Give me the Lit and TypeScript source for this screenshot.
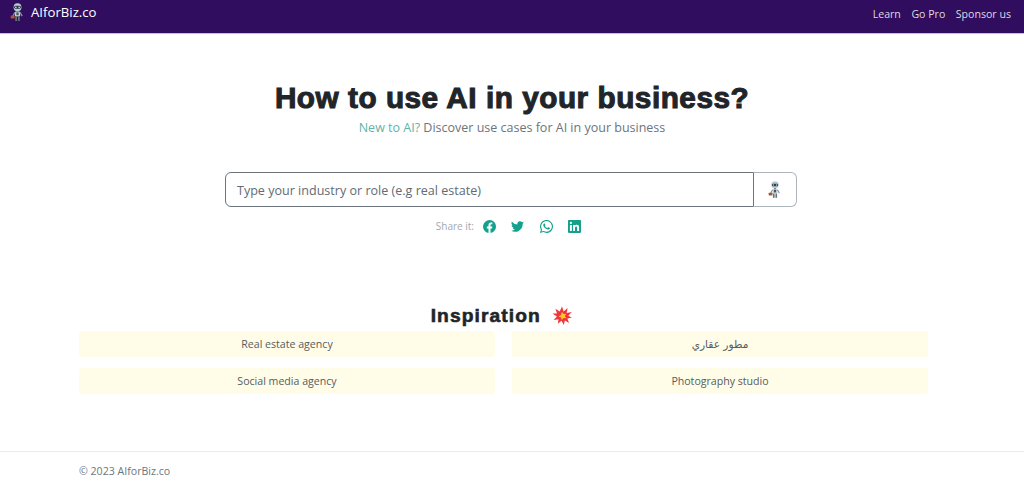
import { LitElement, html, css, svg } from "lit";
import { customElement } from "lit/decorators.js";

const robot = (s: number) => html`<svg class="robot" width=${s} height=${s * 1.25} viewBox="0 0 16 20">
  <rect x="6.8" y="7.5" width="2.4" height="2" fill="#59646c"/>
  <circle cx="8" cy="4.4" r="4.2" fill="#bccbd3"/>
  <rect x="4.4" y="3" width="7.2" height="3" rx="1.5" fill="#2a3640"/>
  <circle cx="6.2" cy="4.5" r=".9" fill="#a9dcf0"/><circle cx="9.8" cy="4.5" r=".9" fill="#a9dcf0"/>
  <rect x="5.2" y="9" width="5.6" height="5.4" rx="1.4" fill="#c3ced4"/>
  <rect x="6.8" y="10" width="2.4" height="3" fill="#49545c"/>
  <path d="M5.2 10 L3 14 M10.8 10 L13 14" stroke="#87949c" stroke-width="1.3"/>
  <rect x=".8" y="13.4" width="4.2" height="3.2" rx=".5" fill="#a8582e"/>
  <rect x="5.6" y="14.4" width="1.9" height="4.8" fill="#65727a"/>
  <rect x="8.5" y="14.4" width="1.9" height="4.8" fill="#65727a"/>
</svg>`;

const icons = [
  svg`<path d="M16 8.05A8 8 0 1 0 6.75 16v-5.6H4.72V8.05h2.03V6.3c0-2 1.2-3.1 3-3.1.88 0 1.8.16 1.8.16v1.97h-1c-1 0-1.3.62-1.3 1.25v1.47h2.22l-.36 2.35H9.25V16A8 8 0 0 0 16 8.05z"/>`,
  svg`<path d="M5.03 14.5c6.04 0 9.34-5 9.34-9.34 0-.14 0-.28-.01-.42A6.7 6.7 0 0 0 16 3.04a6.6 6.6 0 0 1-1.89.52 3.3 3.3 0 0 0 1.45-1.82 6.6 6.6 0 0 1-2.09.8 3.29 3.29 0 0 0-5.6 3A9.32 9.32 0 0 1 1.1 2.1a3.29 3.29 0 0 0 1.02 4.38A3.3 3.3 0 0 1 .64 6.07v.04a3.29 3.29 0 0 0 2.63 3.22 3.3 3.3 0 0 1-1.48.06 3.29 3.29 0 0 0 3.07 2.28A6.6 6.6 0 0 1 0 13.03a9.3 9.3 0 0 0 5.03 1.47z"/>`,
  svg`<path d="M13.6 2.33A7.93 7.93 0 0 0 1.1 11.9L0 16l4.2-1.1a7.9 7.9 0 0 0 3.79.96A7.93 7.93 0 0 0 13.6 2.33zM8 14.53a6.6 6.6 0 0 1-3.36-.92l-.24-.14-2.5.65.67-2.43-.16-.25A6.6 6.6 0 1 1 8 14.53zm3.62-4.94c-.2-.1-1.17-.58-1.35-.64-.18-.07-.31-.1-.45.1-.13.2-.51.64-.62.77-.12.13-.23.15-.43.05-.2-.1-.84-.31-1.6-.99a6 6 0 0 1-1.1-1.37c-.12-.2-.01-.3.09-.4l.3-.35c.1-.12.13-.2.2-.33.06-.13.03-.25-.02-.35-.05-.1-.45-1.08-.61-1.48-.16-.39-.33-.33-.45-.34h-.38a.73.73 0 0 0-.53.25c-.18.2-.7.68-.7 1.66s.72 1.93.81 2.06c.1.13 1.4 2.14 3.4 3 .47.21.84.33 1.13.42.48.15.91.13 1.25.08.38-.06 1.17-.48 1.34-.94.16-.46.16-.86.11-.94-.05-.08-.18-.13-.38-.23z"/>`,
  svg`<path d="M14.8 0H1.2C.53 0 0 .52 0 1.15v13.7C0 15.48.53 16 1.2 16h13.6c.67 0 1.2-.52 1.2-1.15V1.15C16 .52 15.47 0 14.8 0zM4.75 13.63H2.37V6h2.38v7.63zM3.56 4.96a1.38 1.38 0 1 1 0-2.76 1.38 1.38 0 0 1 0 2.76zm10.07 8.67h-2.37V9.92c0-.88-.02-2.02-1.23-2.02-1.23 0-1.42.96-1.42 1.96v3.77H6.24V6h2.27v1.04h.03c.32-.6 1.09-1.23 2.24-1.23 2.4 0 2.85 1.58 2.85 3.63v4.19z"/>`,
];

@customElement("app-root")
export class AppRoot extends LitElement {
  static styles = css`
    :host { display: flex; flex-direction: column; height: 490px; background: #fff; color: #212529;
      font-family: "Open Sans", "Noto Sans", sans-serif; font-size: 11px; overflow: hidden; }
    .nav { height: 34px; box-sizing: border-box; flex: none; background: #300d5e; border-bottom: 1px solid #c9b8e6; display: flex;
      align-items: flex-start; justify-content: space-between; padding: 0 13px 0 10px; }
    .brand { display: flex; align-items: flex-start; color: #fff; font-size: 13.2px; line-height: 24px; }
    .brand .robot { margin: 3px 6px 0 0; }
    .links { display: flex; gap: 10.5px; color: rgba(255,255,255,.85); font-size: 10.6px; line-height: 28px; }
    .hero { height: 138px; flex: none; display: flex; flex-direction: column; align-items: center; }
    h1 { margin: 46px 0 0; font: 700 28.6px/36px "Liberation Sans", Arial, sans-serif; transform: scaleX(1.04); letter-spacing: .5px;
      -webkit-text-stroke: 1px #212529; color: #212529; white-space: nowrap; }
    .sub { margin-top: 3px; font-size: 12.5px; line-height: 18px; color: #6c757d; }
    .sub span { color: #5fb3a8; }
    .search { width: 572px; height: 35px; flex: none; display: flex; box-sizing: border-box; margin-left: 225px; }
    .input { flex: 1; border: 1px solid #6c757d; border-radius: 6px 0 0 6px; padding-left: 11px; color: #626a72;
      font-size: 12.55px; line-height: 35px; }
    .btn { width: 42px; border: 1px solid #adb5bd; border-left: none; border-radius: 0 6px 6px 0; display: flex;
      align-items: center; justify-content: center; }
    .share { height: 38px; flex: none; display: flex; align-items: center; justify-content: center; padding-right: 7px; color: #a1a8ae; font-size: 10px; }
    .share b { font-weight: 400; margin-right: 9px; }
    .share svg { width: 13px; height: 13px; fill: #14a08d; margin-right: 15.4px; }
    .share svg:last-child { margin-right: 0; }
    h2 { margin: 58px 0 0; padding-right: 21px; text-align: center; font: 700 19.2px/26px "Liberation Sans", Arial, sans-serif;
      letter-spacing: 1.1px; -webkit-text-stroke: .6px #212529; flex: none; }
    h2 svg { vertical-align: -4px; margin-left: 5px; }
    .grid { margin: 2px 96px 0 79px; display: grid; grid-template-columns: 1fr 1fr; gap: 11px 17px; flex: none; }
    .chip { height: 26px; background: #fffde8; border-radius: 3px; display: flex; align-items: center; justify-content: center;
      color: #555c63; font-size: 10.6px; }
    .chip.ar { font-family: "DejaVu Sans", sans-serif; font-size: 10.6px; }
    .foot { margin-top: 57px; border-top: 1px solid #e9ecef; padding-left: 79px; color: #6c757d; font-size: 10.6px; line-height: 39px; flex: none; }
  `;

  render() {
    return html`
      <div class="nav">
        <div class="brand">${robot(15)}<span>AIforBiz.co</span></div>
        <div class="links"><span>Learn</span><span>Go Pro</span><span>Sponsor us</span></div>
      </div>
      <div class="hero">
        <h1>How to use AI in your business?</h1>
        <div class="sub"><span>New to AI?</span> Discover use cases for AI in your business</div>
      </div>
      <div class="search">
        <div class="input">Type your industry or role (e.g real estate)</div>
        <div class="btn">${robot(14)}</div>
      </div>
      <div class="share"><b>Share it:</b>${icons.map((p) => html`<svg viewBox="0 0 16 16">${p}</svg>`)}</div>
      <h2>Inspiration <svg width="20" height="20" viewBox="0 0 20 20">
        <path d="M10 .5l1.6 5 4-3.6-.9 5 5-.8-3.4 3.7 3.5 2-4.4.6 1.6 4.6-4.2-2.6-1 4.6-2.3-4.2-3.6 3 .6-4.6-4.9.7 3.3-3.5L.4 7.5l4.6.1L3.4 2.8l4.3 2.6z" fill="#f0353b"/>
        <path d="M10 6l1.7 2 2.5-.2-1.2 2.3 1.2 2.2-2.6-.4L9.8 14l-.8-2.5-2.5-1 2.3-1.4z" fill="#fdc42d"/></svg></h2>
      <div class="grid">
        <div class="chip">Real estate agency</div><div class="chip ar" dir="rtl">مطور عقاري</div>
        <div class="chip">Social media agency</div><div class="chip">Photography studio</div>
      </div>
      <div class="foot">© 2023 AIforBiz.co</div>
    `;
  }
}
